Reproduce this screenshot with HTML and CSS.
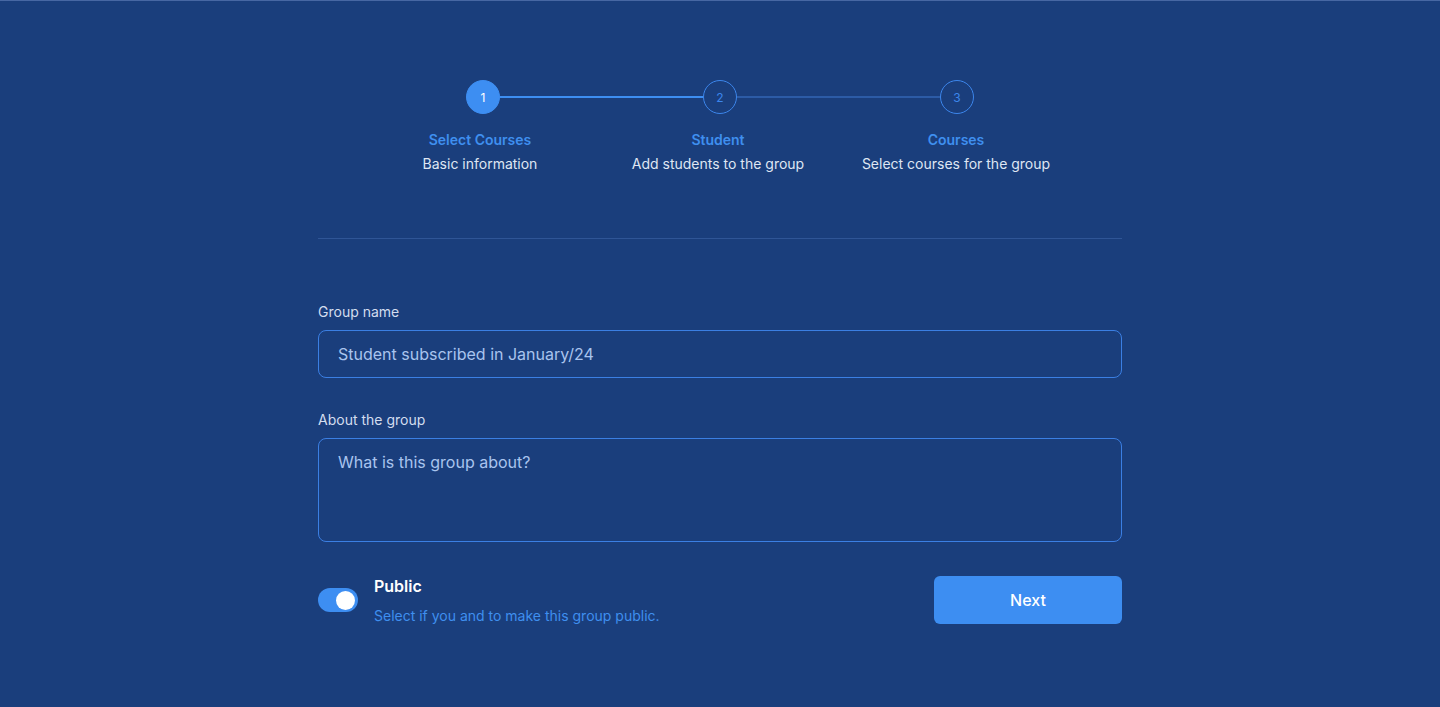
FILE: index.html
```html
<!DOCTYPE html>
<html lang="en">
<head>
<meta charset="utf-8">
<title>Create group</title>
<link rel="stylesheet" href="styles.css">
</head>
<body>
<div class="page">
  <div class="stepper">
    <div class="track">
      <div class="dot dot-active">1</div>
      <div class="bar bar-active"></div>
      <div class="dot">2</div>
      <div class="bar"></div>
      <div class="dot">3</div>
    </div>
    <div class="labels">
      <div class="step">
        <div class="step-title">Select Courses</div>
        <div class="step-sub">Basic information</div>
      </div>
      <div class="step">
        <div class="step-title">Student</div>
        <div class="step-sub">Add students to the group</div>
      </div>
      <div class="step">
        <div class="step-title">Courses</div>
        <div class="step-sub">Select courses for the group</div>
      </div>
    </div>
  </div>

  <div class="form">
    <hr class="divider">
    <label class="field-label">Group name</label>
    <div class="input">Student subscribed in January/24</div>
    <label class="field-label field-label-2">About the group</label>
    <div class="textarea">What is this group about?</div>

    <div class="footer">
      <div class="toggle-group">
        <div class="toggle"><div class="knob"></div></div>
        <div class="toggle-text">
          <div class="toggle-title">Public</div>
          <div class="toggle-desc">Select if you and to make this group public.</div>
        </div>
      </div>
      <button class="next">Next</button>
    </div>
  </div>
</div>
</body>
</html>
```

FILE: styles.css
```css
* { box-sizing: border-box; }
html, body {
  margin: 0;
  padding: 0;
  background: #1a3e7c;
}
body {
  font-family: Inter, "Noto Sans", sans-serif;
  color: #dfe6f3;
  height: 707px;
  overflow: hidden;
}
.page {
  border-top: 1px solid #4767a3;
  height: 707px;
  padding-top: 79px;
}
.stepper {
  display: flex;
  flex-direction: column;
  align-items: center;
}
.track {
  display: flex;
  align-items: center;
  width: 508px;
}
.dot {
  width: 34px;
  height: 34px;
  border-radius: 50%;
  border: 1px solid #3c86ec;
  color: #3c86ec;
  font-size: 12px;
  display: flex;
  align-items: center;
  justify-content: center;
  flex: none;
}
.dot-active {
  background: #3d8ef2;
  border-color: #3d8ef2;
  color: #ffffff;
}
.bar {
  flex: 1;
  height: 2px;
  background: #2c5ba6;
}
.bar-active {
  background: #3d8ef2;
}
.labels {
  display: grid;
  grid-template-columns: 238px 238px 238px;
  margin-top: 14px;
  margin-left: -4px;
  text-align: center;
}
.step-title {
  font-size: 14px;
  line-height: 24px;
  font-weight: 600;
  color: #3f8fef;
}
.step-sub {
  font-size: 14px;
  line-height: 24px;
  color: #dfe6f3;
}
.form {
  width: 804px;
  margin: 0 auto;
}
.divider {
  border: none;
  height: 1px;
  background: #2f5596;
  margin: 62px 0 0 0;
}
.field-label {
  display: block;
  font-size: 14px;
  line-height: 20px;
  color: #d3ddef;
  margin-top: 63px;
  margin-bottom: 8px;
}
.field-label-2 {
  margin-top: 32px;
}
.input, .textarea {
  border: 1px solid #3b7fe3;
  border-radius: 8px;
  font-size: 16px;
  color: #a9c4ee;
  padding: 0 19px;
}
.input {
  height: 48px;
  line-height: 46px;
}
.textarea {
  height: 104px;
  padding-top: 11px;
  line-height: 24px;
}
.footer {
  display: flex;
  justify-content: space-between;
  align-items: flex-start;
  margin-top: 34px;
}
.toggle-group {
  display: flex;
  align-items: flex-start;
  gap: 16px;
}
.toggle {
  width: 40px;
  height: 24px;
  border-radius: 12px;
  background: #3d8ef2;
  margin-top: 12px;
  display: flex;
  align-items: center;
  justify-content: flex-end;
  padding-right: 3px;
}
.knob {
  width: 19px;
  height: 19px;
  border-radius: 50%;
  background: #ffffff;
}
.toggle-title {
  font-size: 16px;
  line-height: 20px;
  font-weight: 600;
  color: #ffffff;
}
.toggle-desc {
  font-size: 14px;
  line-height: 20px;
  color: #3f8fef;
  margin-top: 10px;
}
.next {
  width: 188px;
  height: 48px;
  border: none;
  border-radius: 6px;
  background: #3d8ef2;
  color: #ffffff;
  font-family: Inter, "Noto Sans", sans-serif;
  font-size: 16px;
  font-weight: 500;
  margin-top: 0;
  cursor: pointer;
}
```
